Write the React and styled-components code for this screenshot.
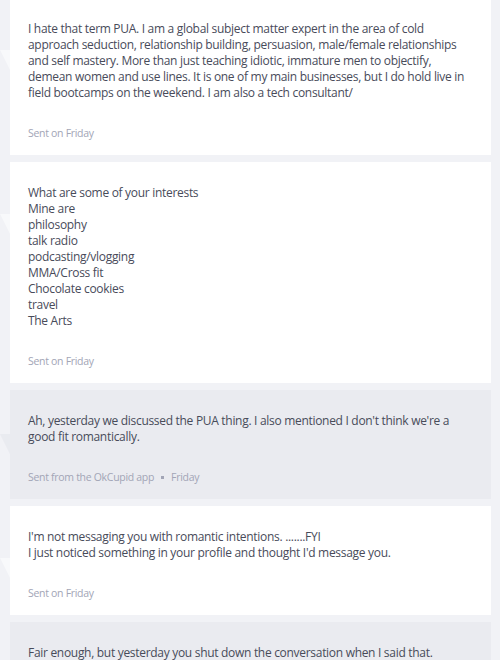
import React from "react";
import styled, { createGlobalStyle } from "styled-components";

const GlobalStyle = createGlobalStyle`
  html, body {
    margin: 0;
    padding: 0;
    background: #f1f2f6;
    overflow: hidden;
  }
  body {
    font-family: "Open Sans", "Liberation Sans", sans-serif;
    -webkit-font-smoothing: antialiased;
  }
`;

const Thread = styled.div`
  display: flex;
  flex-direction: column;
  gap: 7px;
  margin-top: -2px;
  padding: 0 9px 0 10px;
`;

const Bubble = styled.div`
  position: relative;
  background: ${(p) => (p.$mine ? "#ffffff" : "#eaebf0")};
  padding: 23px 18px 14px 18px;

  &::before {
    content: "";
    position: absolute;
    left: -10px;
    top: ${(p) => (p.$mine ? "52px" : "44px")};
    border-top: 20px solid
      ${(p) => (p.$mine ? "rgba(255,255,255,0.5)" : "rgba(226,227,234,0.5)")};
    border-left: 10px solid transparent;
  }
`;

const Body = styled.div`
  font-size: 12px;
  line-height: 16px;
  letter-spacing: -0.3px;
  color: #484b5a;
  white-space: pre-line;
`;

const Meta = styled.div`
  display: flex;
  align-items: center;
  gap: 7px;
  margin-top: 24px;
  font-size: 10.5px;
  line-height: 16px;
  letter-spacing: -0.3px;
  color: #a2a5b6;
`;

const Dot = styled.span`
  width: 3px;
  height: 3px;
  background: #a2a5b6;
`;

const messages = [
  {
    mine: true,
    text:
      "I hate that term PUA. I am a global subject matter expert in the area of cold approach seduction, relationship building, persuasion, male/female relationships and self mastery. More than just teaching idiotic, immature men to objectify, demean women and use lines. It is one of my main businesses, but I do hold live in field bootcamps on the weekend. I am also a tech consultant/",
    meta: ["Sent on Friday"],
  },
  {
    mine: true,
    text:
      "What are some of your interests\nMine are\nphilosophy\ntalk radio\npodcasting/vlogging\nMMA/Cross fit\nChocolate cookies\ntravel\nThe Arts",
    meta: ["Sent on Friday"],
  },
  {
    mine: false,
    text:
      "Ah, yesterday we discussed the PUA thing. I also mentioned I don't think we're a good fit romantically.",
    meta: ["Sent from the OkCupid app", "Friday"],
  },
  {
    mine: true,
    text:
      "I'm not messaging you with romantic intentions. .......FYI\nI just noticed something in your profile and thought I'd message you.",
    meta: ["Sent on Friday"],
  },
  {
    mine: false,
    text: "Fair enough, but yesterday you shut down the conversation when I said that.",
    meta: ["Sent from the OkCupid app", "Friday"],
  },
];

function Message({ mine, text, meta }) {
  return (
    <Bubble $mine={mine}>
      <Body>{text}</Body>
      <Meta>
        {meta.map((m, i) => (
          <React.Fragment key={i}>
            {i > 0 && <Dot />}
            <span>{m}</span>
          </React.Fragment>
        ))}
      </Meta>
    </Bubble>
  );
}

export default function App() {
  return (
    <>
      <GlobalStyle />
      <Thread>
        {messages.map((m, i) => (
          <Message key={i} {...m} />
        ))}
      </Thread>
    </>
  );
}
